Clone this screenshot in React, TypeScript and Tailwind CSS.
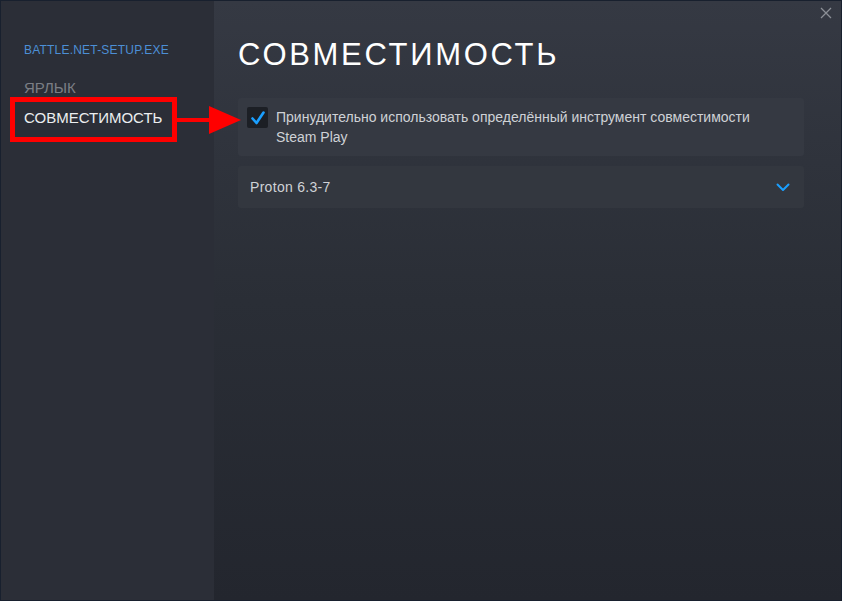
import React from "react";

const font = { fontFamily: '"Liberation Sans", Arial, sans-serif' };

function CheckIcon() {
  return (
    <svg width="16" height="16" viewBox="0 0 16 16" fill="none">
      <path d="M2.5 8.5 L6.5 13 L13.5 2.5" stroke="#1a9fff" strokeWidth="2.6" strokeLinecap="round" strokeLinejoin="round" />
    </svg>
  );
}

function Chevron() {
  return (
    <svg width="14" height="9" viewBox="0 0 14 9" fill="none">
      <path d="M1.5 1.5 L7 7 L12.5 1.5" stroke="#1a9fff" strokeWidth="2" strokeLinecap="round" strokeLinejoin="round" />
    </svg>
  );
}

export default function App() {
  return (
    <div className="relative flex h-[601px] w-[842px] border border-[#18202e] bg-[#24272f] text-[#c7cad0]" style={font}>
      {/* Sidebar */}
      <nav className="flex w-[213px] shrink-0 flex-col bg-[#2b2e37] pl-[23px] pt-[42px]">
        <div className="text-[12px] leading-[15px] tracking-[0.2px] text-[#4c8fd6]">BATTLE.NET-SETUP.EXE</div>
        <div className="mt-[21px] text-[15px] leading-[18px] text-[#7b7e85]">ЯРЛЫК</div>
        <div className="mt-[12px] text-[15px] leading-[18px] text-[#eceef0]">СОВМЕСТИМОСТЬ</div>
      </nav>

      {/* Main */}
      <main className="flex flex-1 flex-col bg-gradient-to-b from-[#353943] via-[#2a2e36] to-[#23262e] pl-[24px] pr-[37px] pt-[36px]">
        <h1 className="text-[31px] leading-[36px] tracking-[2.7px] text-white">СОВМЕСТИМОСТЬ</h1>

        <div className="mt-[25px] flex items-start gap-[8px] rounded-[3px] bg-[#353942] px-[9px] py-[9px]">
          <div className="flex h-[21px] w-[21px] shrink-0 items-center justify-center rounded-[2px] bg-[#1c1f25]">
            <CheckIcon />
          </div>
          <div className="text-[14px] leading-[20px] text-[#cfd2d6]">
            Принудительно использовать определённый инструмент совместимости
            <br />
            Steam Play
          </div>
        </div>

        <div className="mt-[10px] flex h-[42px] items-center justify-between rounded-[3px] bg-[#33373f] pl-[12px] pr-[14px]">
          <span className="text-[14px] tracking-[0.3px] text-[#cfd2d6]">Proton 6.3-7</span>
          <Chevron />
        </div>
      </main>

      {/* Close button */}
      <button className="absolute right-[9px] top-[6px] text-[#8b8f96]">
        <svg width="12" height="12" viewBox="0 0 12 12" fill="none">
          <path d="M1 1 L11 11 M11 1 L1 11" stroke="currentColor" strokeWidth="1.3" />
        </svg>
      </button>

      {/* Annotation: red box + arrow */}
      <div className="pointer-events-none absolute left-[9px] top-[96px] h-[45px] w-[167px] border-[5px] border-[#ff0000]" />
      <svg className="pointer-events-none absolute left-[175px] top-[104px]" width="66" height="30" viewBox="0 0 66 30">
        <rect x="0" y="13" width="36" height="4" fill="#ff0000" />
        <polygon points="33,1 65,15 33,29" fill="#ff0000" />
      </svg>
    </div>
  );
}
